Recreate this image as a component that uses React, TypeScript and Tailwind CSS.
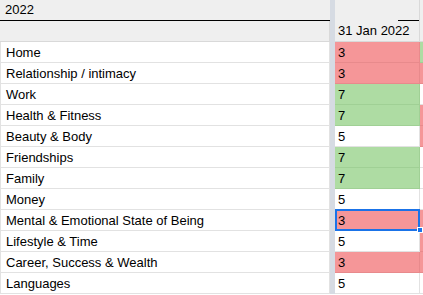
const RED = "bg-[#f59698]";
const GREEN = "bg-[#aedca3]";

type Row = { label: string; value: string; tone: "red" | "green" | "none"; next: "red" | "green" | "none" };

const rows: Row[] = [
  { label: "Home", value: "3", tone: "red", next: "green" },
  { label: "Relationship / intimacy", value: "3", tone: "red", next: "red" },
  { label: "Work", value: "7", tone: "green", next: "none" },
  { label: "Health & Fitness", value: "7", tone: "green", next: "red" },
  { label: "Beauty & Body", value: "5", tone: "none", next: "red" },
  { label: "Friendships", value: "7", tone: "green", next: "none" },
  { label: "Family", value: "7", tone: "green", next: "none" },
  { label: "Money", value: "5", tone: "none", next: "none" },
  { label: "Mental & Emotional State of Being", value: "3", tone: "red", next: "red" },
  { label: "Lifestyle & Time", value: "5", tone: "none", next: "red" },
  { label: "Career, Success & Wealth", value: "3", tone: "red", next: "red" },
  { label: "Languages", value: "5", tone: "none", next: "none" },
];

const toneClass = (t: Row["tone"]) =>
  t === "red" ? `${RED} border-[#e88a8c]` : t === "green" ? `${GREEN} border-[#a0d095]` : "bg-white border-[#e2e2e2]";

export default function App() {
  return (
    <div
      className="w-[423px] h-[295px] overflow-hidden bg-white text-[13px] text-black"
      style={{ fontFamily: '"Liberation Sans", Arial, sans-serif' }}
    >
      {/* title row */}
      <div className="flex h-[21px] bg-[#efefef]">
        <div className="w-[330px] border-b border-black pl-[5px] flex items-center">2022</div>
        <div className="w-[5px] bg-[#d6dbe3]" />
        <div className="w-[85px] border-r border-[#d9d9d9] flex flex-col justify-end">
          <div className="ml-auto w-[21px] border-b border-black" />
        </div>
        <div className="flex-1" />
      </div>
      {/* date row */}
      <div className="flex h-[21px] bg-[#efefef]">
        <div className="w-[330px] border-b border-r border-[#d9d9d9]" />
        <div className="w-[5px] bg-[#d6dbe3]" />
        <div className="w-[85px] border-b border-r border-[#d9d9d9] pl-[3px] flex items-center">31 Jan 2022</div>
        <div className="flex-1 border-b border-[#d9d9d9]" />
      </div>
      {rows.map((r) => (
        <div key={r.label} className="flex h-[21px]">
          <div className="w-[330px] border-b border-l border-r border-[#e2e2e2] pl-[5px] flex items-center pt-[1px]">
            {r.label}
          </div>
          <div className="w-[5px] bg-[#d6dbe3]" />
          <div className={`relative w-[85px] border-b border-r ${toneClass(r.tone)} pl-[3px] flex items-center pt-[1px]`}>
            {r.value}
            {r.label.startsWith("Mental") && (
              <>
                <div className="absolute left-0 top-[-1px] w-[85px] h-[22px] border-2 border-[#1a73e8]" />
                <div className="absolute left-[82px] top-[17px] w-[6px] h-[6px] bg-[#1a73e8] border border-white z-10" />
              </>
            )}
          </div>
          <div
            className={`flex-1 border-b ${
              r.next === "red" ? `${RED} border-[#e88a8c]` : r.next === "green" ? `${GREEN} border-[#a0d095]` : "bg-white border-[#e2e2e2]"
            }`}
          />
        </div>
      ))}
    </div>
  );
}
